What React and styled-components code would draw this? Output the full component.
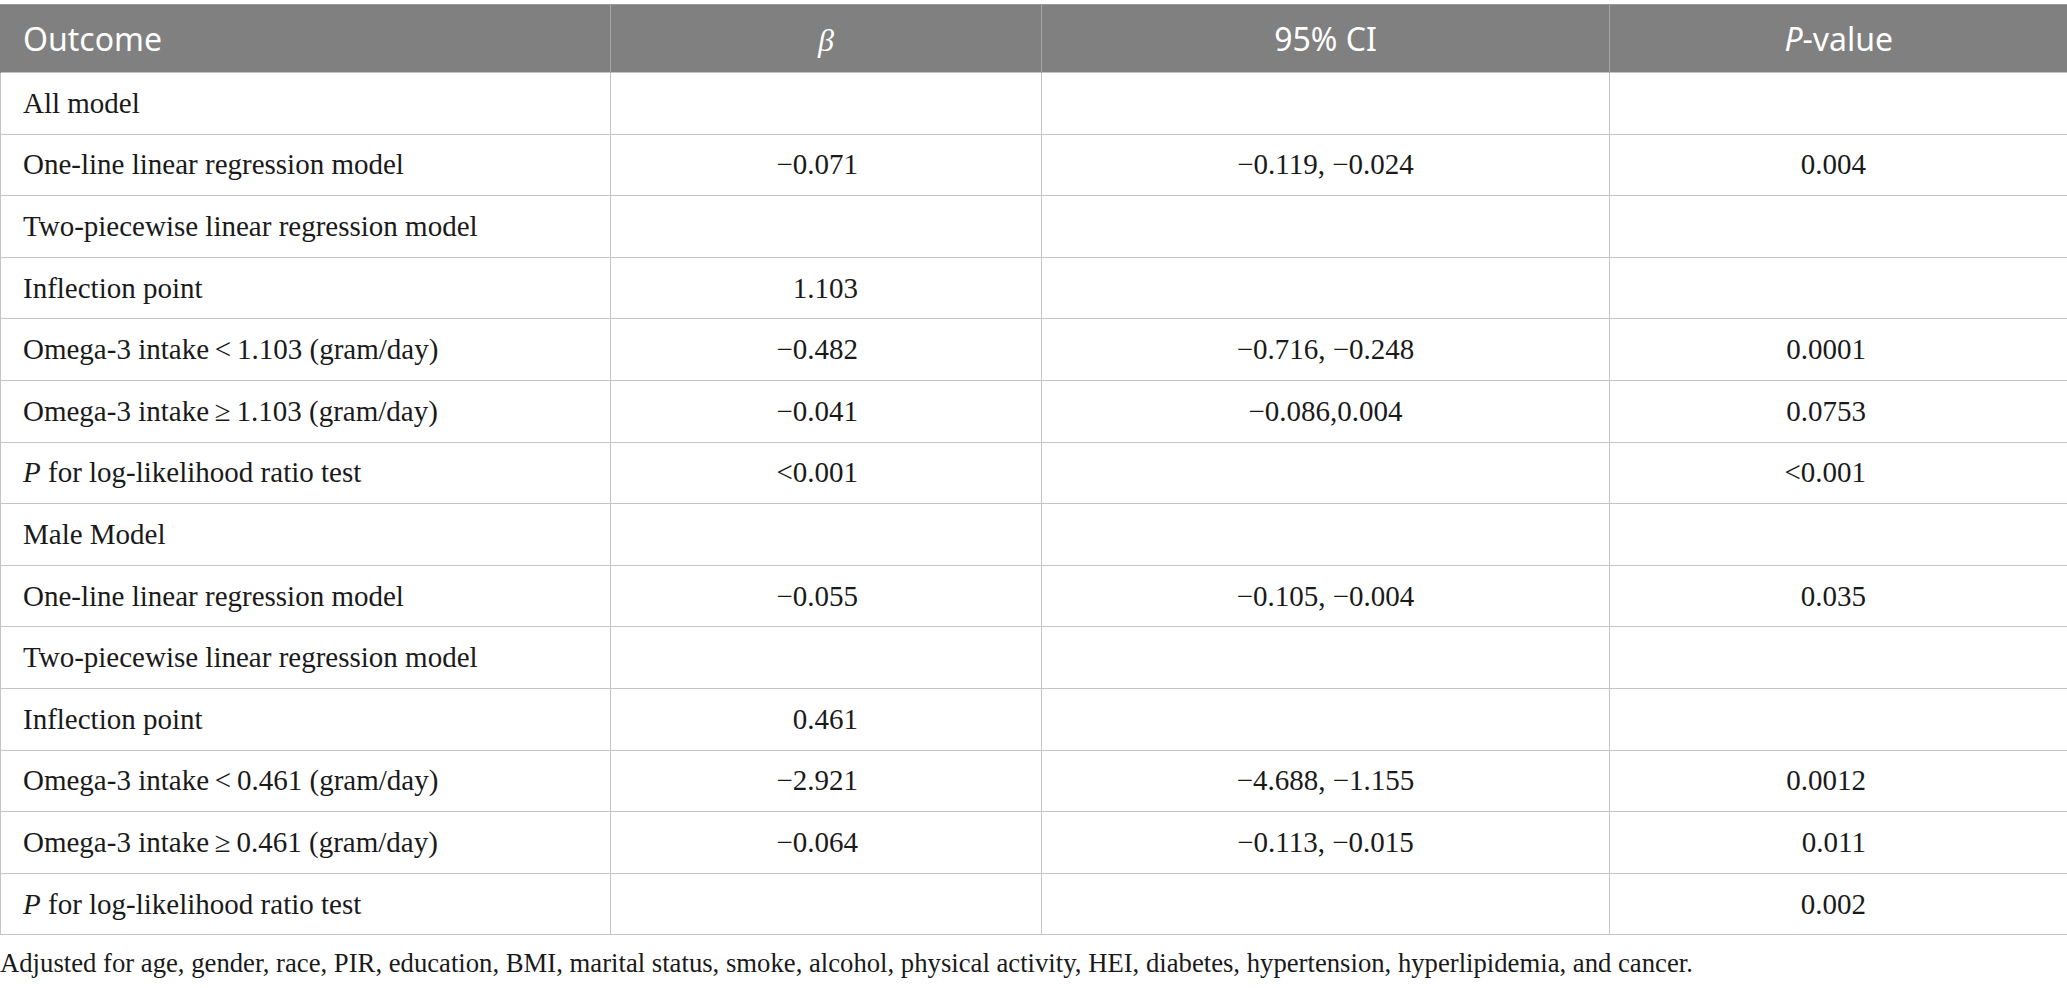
import React from 'react';
import styled, { createGlobalStyle } from 'styled-components';

const GlobalStyle = createGlobalStyle`
  html, body {
    margin: 0;
    padding: 0;
    background: #ffffff;
  }
  body {
    font-family: "Liberation Serif", "Times New Roman", serif;
    color: #1a1a1a;
  }
`;

const Page = styled.div`
  padding-top: 4px;
  width: 2067px;
`;

const Table = styled.table`
  width: 2067px;
  border-collapse: collapse;
  table-layout: fixed;
`;

const HeadCell = styled.th`
  background: #808080;
  color: #ffffff;
  font-family: "Noto Sans", "Open Sans", sans-serif;
  font-weight: 400;
  font-size: 32px;
  height: 67px;
  padding: 0 22px;
  text-align: ${(p) => (p.$left ? 'left' : 'center')};
  border-left: 1px solid #a6a6a6;
  border-top: 1px solid #9a9a9a;
  &:first-child {
    border-left: 1px solid #808080;
  }
  em {
    font-style: italic;
  }
`;

const Beta = styled.em`
  font-family: "Liberation Serif", "Times New Roman", serif;
  font-style: italic;
`;

const Cell = styled.td`
  height: 60.6px;
  padding: ${(p) => (p.$align === 'right' ? `0 ${p.$pad}px 0 0` : '0 22px')};
  font-size: 29px;
  text-align: ${(p) => p.$align || 'left'};
  border: 1px solid #c4c4c4;
  white-space: nowrap;
  color: #1a1a1a;
  em {
    font-style: italic;
  }
`;

const Note = styled.p`
  margin: 12px 0 0 0;
  font-size: 26.7px;
  line-height: 1.2;
  white-space: nowrap;
  color: #1a1a1a;
`;

const rows = [
  ['All model', '', '', ''],
  ['One-line linear regression model', '\u22120.071', '\u22120.119, \u22120.024', '0.004'],
  ['Two-piecewise linear regression model', '', '', ''],
  ['Inflection point', '1.103', '', ''],
  ['Omega-3 intake\u2009<\u20091.103 (gram/day)', '\u22120.482', '\u22120.716, \u22120.248', '0.0001'],
  ['Omega-3 intake\u2009\u2265\u20091.103 (gram/day)', '\u22120.041', '\u22120.086,0.004', '0.0753'],
  [<><em>P</em> for log-likelihood ratio test</>, '<0.001', '', '<0.001'],
  ['Male Model', '', '', ''],
  ['One-line linear regression model', '\u22120.055', '\u22120.105, \u22120.004', '0.035'],
  ['Two-piecewise linear regression model', '', '', ''],
  ['Inflection point', '0.461', '', ''],
  ['Omega-3 intake\u2009<\u20090.461 (gram/day)', '\u22122.921', '\u22124.688, \u22121.155', '0.0012'],
  ['Omega-3 intake\u2009\u2265\u20090.461 (gram/day)', '\u22120.064', '\u22120.113, \u22120.015', '0.011'],
  [<><em>P</em> for log-likelihood ratio test</>, '', '', '0.002'],
];

export default function App() {
  return (
    <Page>
      <GlobalStyle />
      <Table>
        <colgroup>
          <col style={{ width: 610 }} />
          <col style={{ width: 431 }} />
          <col style={{ width: 568 }} />
          <col style={{ width: 458 }} />
        </colgroup>
        <thead>
          <tr>
            <HeadCell $left>Outcome</HeadCell>
            <HeadCell>
              <Beta>β</Beta>
            </HeadCell>
            <HeadCell>95% CI</HeadCell>
            <HeadCell>
              <em>P</em>-value
            </HeadCell>
          </tr>
        </thead>
        <tbody>
          {rows.map((r, i) => (
            <tr key={i}>
              <Cell>{r[0]}</Cell>
              <Cell $align="right" $pad={183}>{r[1]}</Cell>
              <Cell $align="center">{r[2]}</Cell>
              <Cell $align="right" $pad={201}>{r[3]}</Cell>
            </tr>
          ))}
        </tbody>
      </Table>
      <Note>
        Adjusted for age, gender, race, PIR, education, BMI, marital status, smoke, alcohol, physical activity, HEI,
        diabetes, hypertension, hyperlipidemia, and cancer.
      </Note>
    </Page>
  );
}
